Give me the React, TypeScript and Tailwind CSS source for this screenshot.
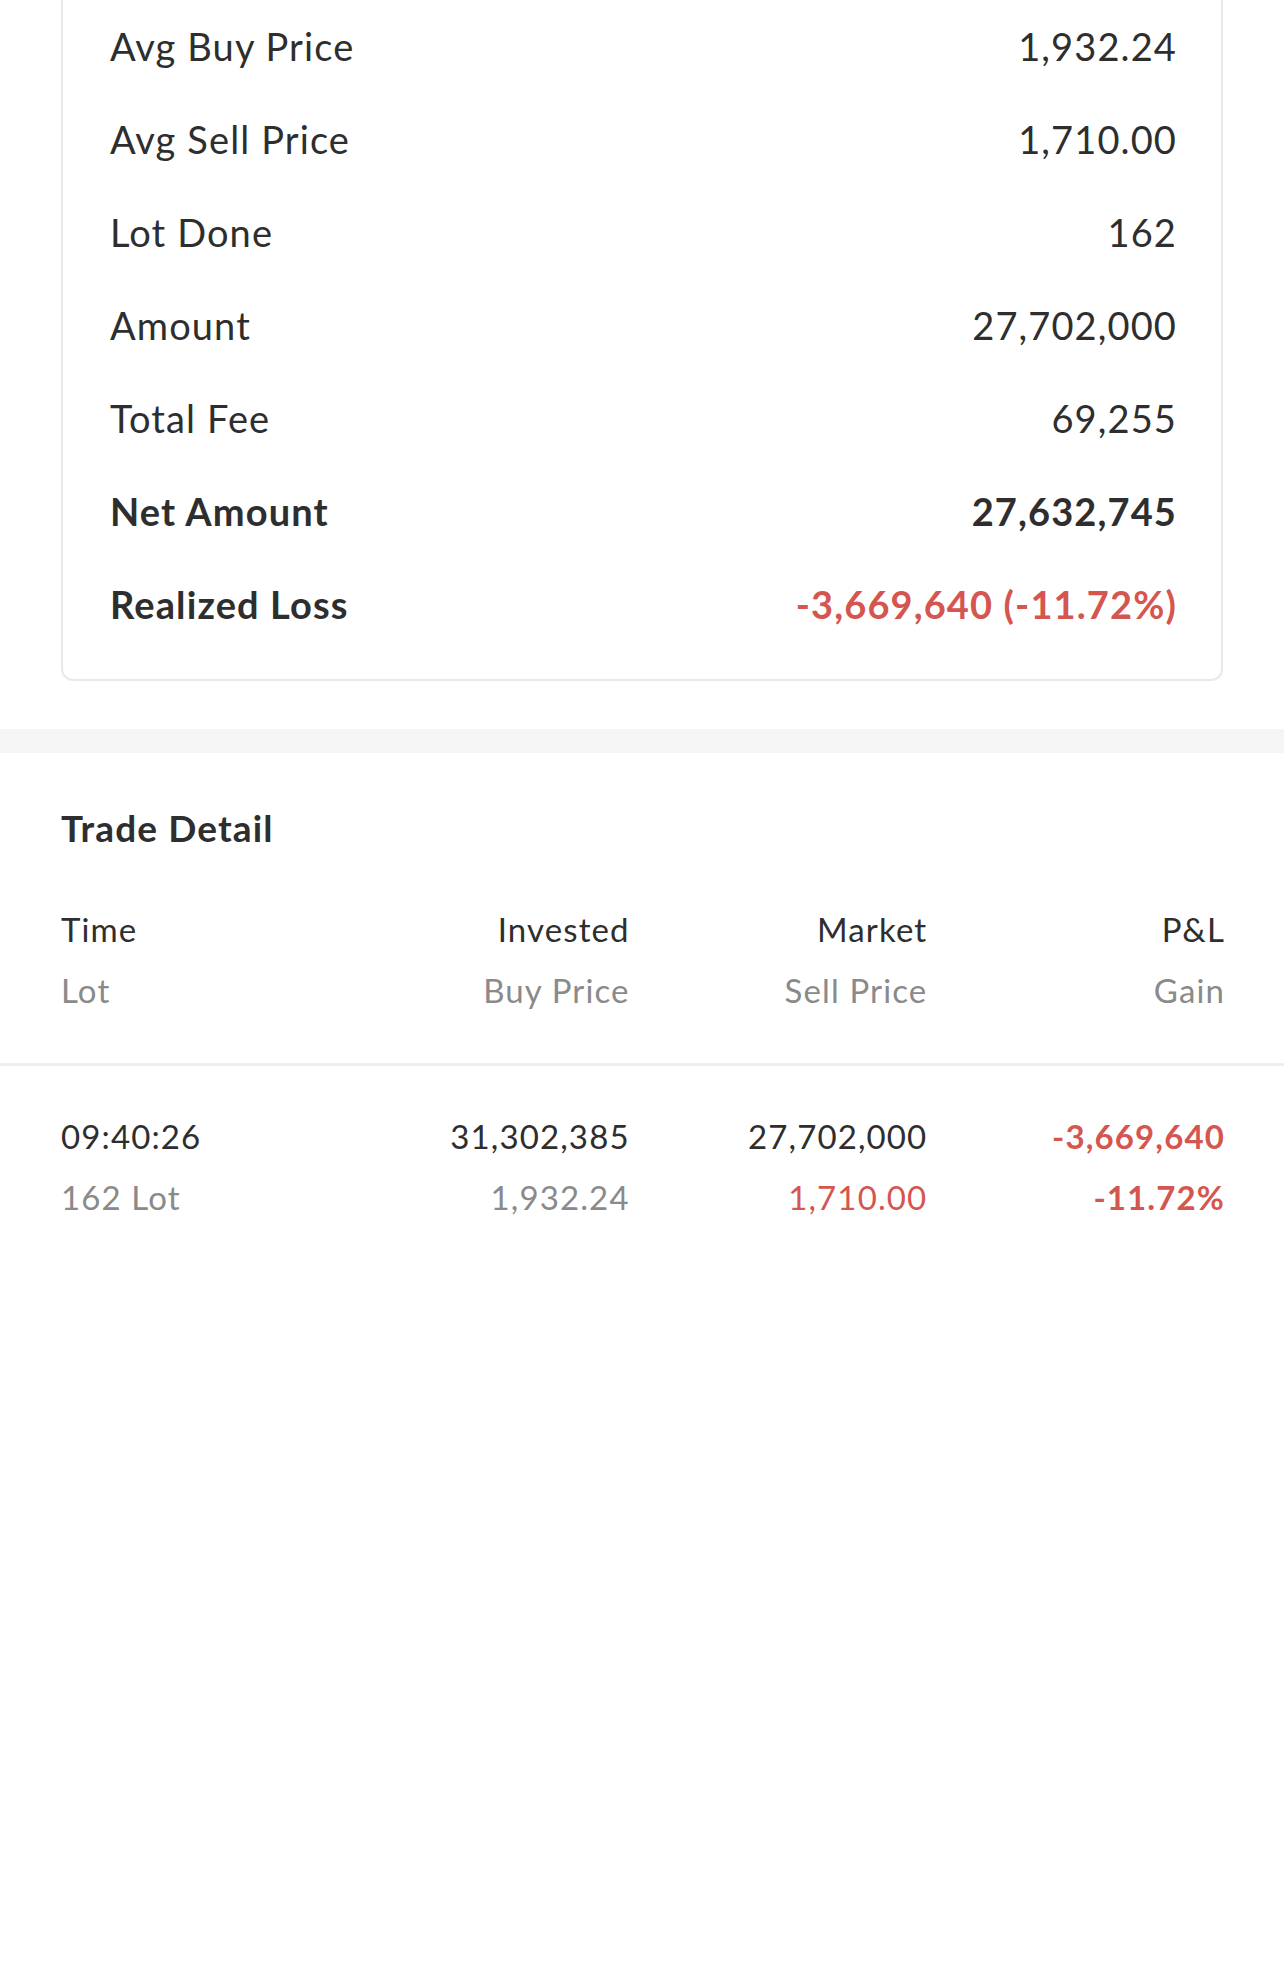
type SummaryRow = {
  label: string
  value: string
  bold?: boolean
  loss?: boolean
}

const summary: SummaryRow[] = [
  { label: "Avg Buy Price", value: "1,932.24" },
  { label: "Avg Sell Price", value: "1,710.00" },
  { label: "Lot Done", value: "162" },
  { label: "Amount", value: "27,702,000" },
  { label: "Total Fee", value: "69,255" },
  { label: "Net Amount", value: "27,632,745", bold: true },
  { label: "Realized Loss", value: "-3,669,640 (-11.72%)", bold: true, loss: true }
]

export default function App() {
  return (
    <div
      className="min-h-[1975px] w-full bg-white tracking-[0.07em] text-[#2e2e2e]"
      style={{ fontFamily: "Lato, 'Open Sans', sans-serif" }}
    >
      {/* Summary card, its top is cut off by the scroll */}
      <div className="px-[61px]">
        <div className="rounded-b-[12px] border-x-2 border-b-2 border-[#e9e9e9] pl-[47px] pr-[44px] pb-[28px]">
          {summary.map(row => (
            <div key={row.label} className="flex h-[93px] items-center justify-between text-[38px]">
              <span className={row.bold ? "font-bold" : ""}>{row.label}</span>
              <span
                className={
                  (row.bold ? "font-bold " : "") + (row.loss ? "text-[#d5554f]" : "")
                }
              >
                {row.value}
              </span>
            </div>
          ))}
        </div>
      </div>

      <div className="mt-[48px] h-[24px] bg-[#f5f5f5]" />

      {/* Trade detail */}
      <div className="pl-[61px] pr-[59px] pt-[52px]">
        <h2 className="text-[37px] font-bold leading-[46px]">Trade Detail</h2>

        <div className="mt-[48px] grid grid-cols-[271px_1fr_1fr_1fr] pb-[42px] text-[33px] leading-[61px]">
          <div>
            <div>Time</div>
            <div className="text-[#8a8a8a]">Lot</div>
          </div>
          <div className="text-right">
            <div>Invested</div>
            <div className="text-[#8a8a8a]">Buy Price</div>
          </div>
          <div className="text-right">
            <div>Market</div>
            <div className="text-[#8a8a8a]">Sell Price</div>
          </div>
          <div className="text-right">
            <div>P&amp;L</div>
            <div className="text-[#8a8a8a]">Gain</div>
          </div>
        </div>
      </div>

      <div className="h-[3px] bg-[#efefef]" />

      <div className="pl-[61px] pr-[59px] pt-[40px]">
        <div className="grid grid-cols-[271px_1fr_1fr_1fr] text-[33px] leading-[61px]">
          <div>
            <div>09:40:26</div>
            <div className="text-[#8a8a8a]">162 Lot</div>
          </div>
          <div className="text-right">
            <div>31,302,385</div>
            <div className="text-[#8a8a8a]">1,932.24</div>
          </div>
          <div className="text-right">
            <div>27,702,000</div>
            <div className="text-[#d5554f]">1,710.00</div>
          </div>
          <div className="text-right font-bold text-[#d5554f]">
            <div>-3,669,640</div>
            <div>-11.72%</div>
          </div>
        </div>
      </div>
    </div>
  )
}
